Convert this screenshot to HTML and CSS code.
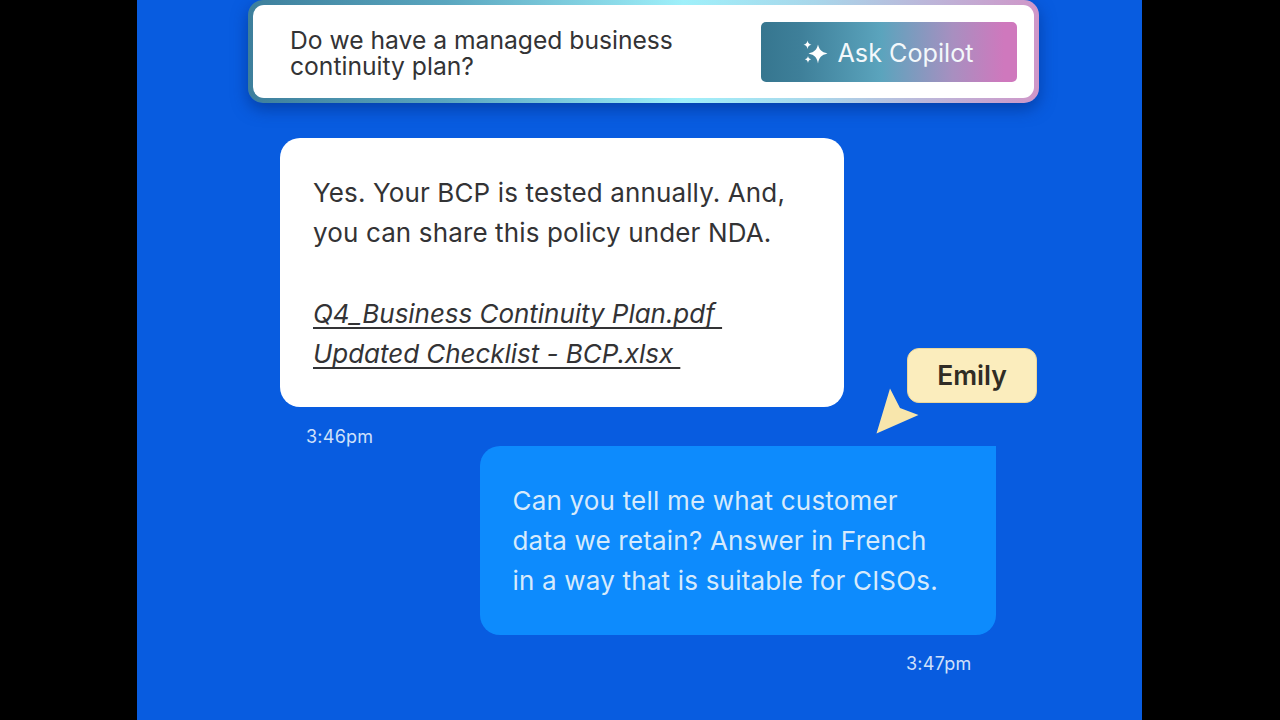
FILE: index.html
```html
<!DOCTYPE html>
<html lang="en">
<head>
<meta charset="utf-8">
<title>Ask Copilot</title>
<link rel="stylesheet" href="styles.css">
</head>
<body>
<main class="stage">
  <section class="prompt">
    <div class="prompt-inner">
      <p class="prompt-text">Do we have a managed business continuity plan?</p>
      <button class="ask">
        <svg class="spark" width="26" height="25" viewBox="0 0 26 24" aria-hidden="true">
          <path d="M15 4 C16.200 9.200 18.200 11.400 24.500 13 C18.200 14.600 16.200 16.800 15 23 C13.800 16.800 11.800 14.600 5.500 13 C11.800 11.400 13.800 9.200 15 4 Z"/>
          <path d="M4.500 0 C5 2.600 6 3.600 8.500 4.200 C6 4.800 5 5.800 4.500 8.500 C4 5.800 3 4.800 0.500 4.200 C3 3.600 4 2.600 4.500 0 Z"/>
          <path d="M5 15.500 C5.400 17.500 6.200 18.300 8.200 18.800 C6.200 19.300 5.400 20.100 5 22.500 C4.600 20.100 3.800 19.300 1.800 18.800 C3.800 18.300 4.600 17.500 5 15.500 Z"/>
        </svg>
        <span>Ask Copilot</span>
      </button>
    </div>
  </section>

  <section class="bubble reply">
    <p>Yes. Your BCP is tested annually. And,<br>you can share this policy under NDA.</p>
    <p class="files">
      <a class="file">Q4_Business Continuity Plan.pdf&nbsp;</a><br>
      <a class="file">Updated Checklist - BCP.xlsx&nbsp;</a>
    </p>
  </section>
  <div class="time reply-time">3:46pm</div>

  <section class="bubble question">
    <p>Can you tell me what customer<br>data we retain? Answer in French<br>in a way that is suitable for CISOs.</p>
    <svg class="pointer" width="44" height="46" viewBox="0 0 44 46" aria-hidden="true">
      <path d="M14 0.500 L24 20 L42.500 27 L0.500 45.500 Z"/>
    </svg>
    <div class="tag">Emily</div>
  </section>
  <div class="time question-time">3:47pm</div>
</main>
</body>
</html>
```
FILE: styles.css
```css
* { box-sizing: border-box; }
html, body { margin: 0; height: 100%; }
body {
  background: #000;
  font-family: Inter, "Liberation Sans", sans-serif;
  overflow: hidden;
}
p { margin: 0; }
.stage {
  width: 1005px;
  height: 720px;
  margin-left: 137px;
  background: #085ce0;
  display: flex;
  flex-direction: column;
  align-items: flex-start;
}
.prompt {
  width: 791px;
  height: 103px;
  margin-left: 111px;
  padding: 5px;
  border-radius: 15px;
  background: linear-gradient(90deg, #3d7f9c 0%, #5aa6bf 25%, #9ff0fa 55%, #a9d6ea 72%, #cf96c8 100%);
  box-shadow: 0 6px 16px rgba(4, 45, 130, .6);
}
.prompt-inner {
  height: 93px;
  background: #fff;
  border-radius: 11px;
  padding: 17px 17px 16px 37px;
  display: flex;
  align-items: center;
  justify-content: space-between;
}
.prompt-text {
  width: 420px;
  padding-top: 1px;
  font-size: 24.650px;
  line-height: 26px;
  color: #333335;
}
.ask {
  width: 256px;
  height: 60px;
  border: 0;
  border-radius: 5px;
  background: linear-gradient(90deg, #36768f 0%, #3e7f99 15%, #5ba4bd 47%, #a88fc0 75%, #cf78bd 95%);
  color: #f3f8fb;
  font: 400 25.200px Inter, "Liberation Sans", sans-serif;
  display: flex;
  align-items: center;
  justify-content: center;
  gap: 8px;
  padding: 2px 1px 0 0;
}
.spark { fill: #fff; flex: none; margin-bottom: 2px; }
.bubble {
  font-size: 26px;
  line-height: 40px;
  letter-spacing: .13px;
}
.bubble.reply {
  width: 564px;
  height: 269px;
  margin: 35px 0 0 143px;
  padding: 35px 32px 0 33px;
  background: #fff;
  border-radius: 20px;
  color: #333335;
}
.files {
  margin-top: 41px;
  font-style: italic;
  letter-spacing: -.04px;
}
.file {
  color: #333335;
  text-decoration: underline;
  text-decoration-thickness: 2px;
  text-decoration-skip-ink: none;
  text-underline-offset: 4px;
}
.time {
  font-size: 18px;
  line-height: 22px;
  letter-spacing: .25px;
  color: #cfe0fa;
}
.reply-time { margin: 19px 0 0 169px; }
.bubble.question {
  position: relative;
  width: 516px;
  height: 189px;
  margin: -2px 0 0 343px;
  padding: 35px 0 0 32.500px;
  background: #0d8bfd;
  border-radius: 20px 0 20px 20px;
  color: #d6eafc;
  letter-spacing: .19px;
}
.question-time { margin: 18px 0 0 769px; }
.pointer {
  position: absolute;
  left: 396px;
  top: -58px;
  fill: #f8e6ac;
}
.tag {
  position: absolute;
  left: 427px;
  top: -98px;
  width: 130px;
  height: 55px;
  background: #fbedbd;
  border: 1px solid #ecd79a;
  border-radius: 12px;
  color: #302c24;
  font-size: 26.500px;
  line-height: 53px;
  font-weight: 600;
  text-align: center;
  letter-spacing: 0;
}
```
